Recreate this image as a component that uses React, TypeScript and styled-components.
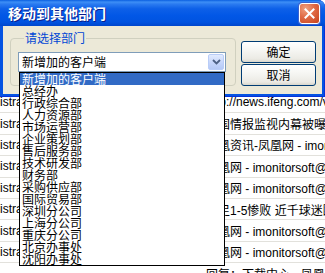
import * as React from 'react'
import styled, { createGlobalStyle } from 'styled-components'

const GlobalStyle = createGlobalStyle`
  html, body {
    margin: 0;
    padding: 0;
    background: #fff;
    overflow: hidden;
  }
`

const UI_FONT = `"Liberation Sans", "Noto Sans CJK SC", sans-serif`

const departments = [
  '新增加的客户端',
  '总经办',
  '行政综合部',
  '人力资源部',
  '市场运营部',
  '企业策划部',
  '售后服务部',
  '技术研发部',
  '财务部',
  '采购供应部',
  '国际贸易部',
  '深圳分公司',
  '上海分公司',
  '重庆分公司',
  '北京办事处',
  '沈阳办事处',
]

const backRows = [
  { name: 'Administrator', title: 'http://news.ifeng.com/video/detail.shtml' },
  { name: 'Administrator', title: '美国情报监视内幕被曝光' },
  { name: 'Administrator', title: '凤凰资讯-凤凰网 - imonitorsoft@163.com' },
  { name: 'Administrator', title: '凤凰网 - imonitorsoft@163.com' },
  { name: 'Administrator', title: '凤凰网 - imonitorsoft@163.com' },
  { name: 'Administrator', title: '国足1-5惨败 近千球迷围堵' },
  { name: 'Administrator', title: '凤凰网 - imonitorsoft@163.com' },
  { name: 'Administrator', title: '凤凰网 - imonitorsoft@163.com' },
  { name: '', title: '回复：下载中心 - 凤凰网' },
]

const Screen = styled.div`
  position: relative;
  width: 325px;
  height: 273px;
  overflow: hidden;
  background: #fff;
  font-family: ${UI_FONT};
`

/* the mail list that sits behind the dialog */
const Backdrop = styled.div`
  padding-top: 92px;
  margin-left: -36px;
`

const BackRow = styled.div`
  display: flex;
  height: 21.4px;
  box-sizing: border-box;
  border-bottom: 1px solid #e2e1dc;
  align-items: center;
  font-size: 12px;
  color: #000;
  white-space: nowrap;
`

const NameCell = styled.div`
  width: 240px;
  padding-left: 2px;
  overflow: hidden;
`

const TitleCell = styled.div`
  flex: 1;
  overflow: hidden;
`

const Dialog = styled.div`
  position: absolute;
  top: 0;
  left: 0;
  width: 325px;
  height: 97px;
  display: flex;
  flex-direction: column;
  background: #0553e2;
  border-top-right-radius: 7px;
  box-shadow: inset -1px 0 0 #0831d9, inset 0 -1px 0 #0831d9;
`

const TitleBar = styled.div`
  height: 26px;
  flex: none;
  display: flex;
  align-items: center;
  justify-content: space-between;
  padding: 0 5px 0 8px;
  border-top-right-radius: 7px;
  background: linear-gradient(
    180deg,
    #0a5fe0 0%,
    #3d8ff6 8%,
    #2a7af0 16%,
    #0d60e8 34%,
    #0257e6 60%,
    #0053e0 85%,
    #0046cc 100%
  );
`

const Title = styled.span`
  font-family: "Noto Sans CJK SC", sans-serif;
  font-weight: 700;
  font-size: 14px;
  line-height: 16px;
  color: #fff;
  text-shadow: 1px 1px 0 #0a1e8c;
`

const CloseButton = styled.div`
  width: 19px;
  height: 19px;
  border: 1px solid #fff;
  border-radius: 3px;
  display: flex;
  align-items: center;
  justify-content: center;
  background: radial-gradient(circle at 30% 25%, #f0a07f 0%, #e06a45 45%, #c7421c 100%);
  box-shadow: 0 0 0 1px #3b62cf;
`

const Body = styled.div`
  flex: 1;
  margin: 0 3px 3px;
  background: #ece9d8;
  display: flex;
  align-items: flex-start;
  padding: 6px 0 0 7px;
  box-sizing: border-box;
`

const GroupBox = styled.fieldset`
  box-sizing: border-box;
  width: 226px;
  height: 54px;
  margin: 0;
  padding: 8px 0 0 7px;
  border: 1px solid #d0d0bf;
  border-radius: 4px;
  min-inline-size: 0;
`

const GroupLabel = styled.legend`
  padding: 0 1px;
  margin-left: 6px;
  font-family: "Noto Sans CJK SC", sans-serif;
  font-size: 12px;
  line-height: 12px;
  color: #0046d5;
`

const Combo = styled.div`
  box-sizing: border-box;
  width: 208px;
  height: 20px;
  border: 1px solid #7f9db9;
  background: #fff;
  display: flex;
  align-items: center;
  justify-content: space-between;
  padding: 0 1px 0 3px;
`

const ComboText = styled.span`
  font-family: "Noto Sans CJK SC", sans-serif;
  font-size: 12px;
  line-height: 12px;
  color: #000;
`

const DropButton = styled.div`
  width: 16px;
  height: 16px;
  box-sizing: border-box;
  border: 1px solid #b9cdf8;
  border-radius: 2px;
  background: linear-gradient(180deg, #e2ebfe 0%, #c6d6fb 55%, #b5c9f6 100%);
  display: flex;
  align-items: center;
  justify-content: center;
`

const ButtonColumn = styled.div`
  display: flex;
  flex-direction: column;
  gap: 1px;
  margin: 9px 0 0 5px;
`

const PushButton = styled.div`
  box-sizing: border-box;
  width: 75px;
  height: 22px;
  border: 1px solid #003c74;
  border-radius: 3px;
  background: linear-gradient(180deg, #ffffff 0%, #f6f6f3 40%, #ebeae4 85%, #d8d6cc 100%);
  display: flex;
  align-items: center;
  justify-content: center;
  font-family: "Noto Sans CJK SC", sans-serif;
  font-size: 12px;
  line-height: 12px;
  color: #000;
`

const DropList = styled.div`
  position: absolute;
  top: 72px;
  left: 19px;
  width: 206px;
  box-sizing: border-box;
  border: 1px solid #000;
  background: #fff;
`

const ListItem = styled.div<{ selected?: boolean }>`
  height: 12px;
  line-height: 12px;
  padding-left: 2px;
  font-family: "Noto Sans CJK SC", sans-serif;
  font-size: 12px;
  white-space: nowrap;
  color: ${(p) => (p.selected ? '#fff' : '#000')};
  background: ${(p) => (p.selected ? '#316ac5' : 'transparent')};
`

export default function App() {
  return (
    <Screen>
      <GlobalStyle />
      <Backdrop>
        {backRows.map((row, i) => (
          <BackRow key={i}>
            <NameCell>{row.name}</NameCell>
            <TitleCell>{row.title}</TitleCell>
          </BackRow>
        ))}
      </Backdrop>

      <Dialog>
        <TitleBar>
          <Title>移动到其他部门</Title>
          <CloseButton>
            <svg width="11" height="11" viewBox="0 0 11 11">
              <path d="M1.5 1.5 L9.5 9.5 M9.5 1.5 L1.5 9.5" stroke="#fff" strokeWidth="2" strokeLinecap="square" />
            </svg>
          </CloseButton>
        </TitleBar>
        <Body>
          <GroupBox>
            <GroupLabel>请选择部门</GroupLabel>
            <Combo>
              <ComboText>新增加的客户端</ComboText>
              <DropButton>
                <svg width="9" height="6" viewBox="0 0 9 6">
                  <path d="M1 1 L4.5 4.5 L8 1" fill="none" stroke="#4d6185" strokeWidth="1.8" />
                </svg>
              </DropButton>
            </Combo>
          </GroupBox>
          <ButtonColumn>
            <PushButton>确定</PushButton>
            <PushButton>取消</PushButton>
          </ButtonColumn>
        </Body>
      </Dialog>

      <DropList>
        {departments.map((name, i) => (
          <ListItem key={name} selected={i === 0}>
            {name}
          </ListItem>
        ))}
      </DropList>
    </Screen>
  )
}
